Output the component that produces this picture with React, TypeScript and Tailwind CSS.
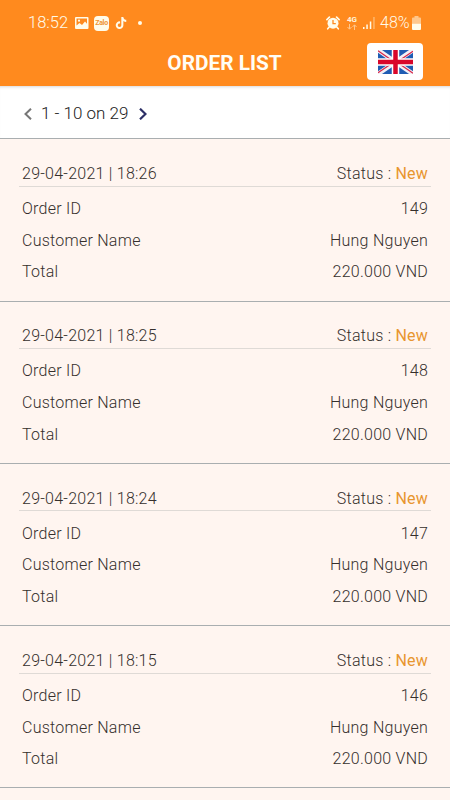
import { FaTiktok } from 'react-icons/fa';

const orders = [
  { id: 149, date: '29-04-2021 | 18:26', customer: 'Hung Nguyen', total: '220.000 VND', status: 'New' },
  { id: 148, date: '29-04-2021 | 18:25', customer: 'Hung Nguyen', total: '220.000 VND', status: 'New' },
  { id: 147, date: '29-04-2021 | 18:24', customer: 'Hung Nguyen', total: '220.000 VND', status: 'New' },
  { id: 146, date: '29-04-2021 | 18:15', customer: 'Hung Nguyen', total: '220.000 VND', status: 'New' },
];

type Order = (typeof orders)[number];

function PictureIcon() {
  return (
    <svg width="14" height="12" viewBox="0 0 14 12" aria-hidden="true">
      <path
        fillRule="evenodd"
        fill="#fffbea"
        d="M1 0h11.500a1 1 0 0 1 1 1v10a1 1 0 0 1-1 1H1a1 1 0 0 1-1-1V1a1 1 0 0 1 1-1ZM1.500 1.500v7l3-2.500 2.500 2 3-3.500 2 2.300V1.500H1.500Z"
      />
      <circle cx="4" cy="3.700" r="1.100" fill="#fffbea" />
    </svg>
  );
}

function AlarmIcon() {
  return (
    <svg width="14" height="14" viewBox="0 0 14 14" fill="none" aria-hidden="true">
      <circle cx="7" cy="7.200" r="5.500" fill="#fffbea" />
      <path d="M7 4v3.700h2.800" stroke="#ff8a1e" strokeWidth="1.300" />
      <path d="M.9 3.600 3.400 1.100M13.100 3.600 10.600 1.100" stroke="#fffbea" strokeWidth="1.700" strokeLinecap="round" />
      <path d="m3.200 11-1.500 1.800M10.800 11l1.500 1.800" stroke="#fffbea" strokeWidth="1.600" strokeLinecap="round" />
    </svg>
  );
}

function NetworkIcon() {
  return (
    <div className="flex w-[12px] flex-col items-center">
      <span className="text-[8px] leading-[8px] font-bold text-[#fff3da]">4G</span>
      <svg width="10" height="6" viewBox="0 0 10 6" fill="none" stroke="#ffc78c" aria-hidden="true">
        <path d="M2.500 0v5M.5 3l2 2.200L4.500 3M7.500 6V1M5.500 3l2-2.200 2 2.200" />
      </svg>
    </div>
  );
}

function SignalIcon() {
  return (
    <svg width="12" height="12" viewBox="0 0 12 12" aria-hidden="true">
      <path d="M0 10h1.500v2H0zM3.300 7.500h1.500V12H3.300zM6.800 4.500h1.500V12H6.800z" fill="#fffbea" />
      <path d="M10.200 0h1.500v12h-1.500z" fill="#ffb76b" />
    </svg>
  );
}

function BatteryIcon() {
  return (
    <svg width="9" height="14" viewBox="0 0 9 14" aria-hidden="true">
      <path d="M2.500 0h4v1.500H8a1 1 0 0 1 1 1V7.500H0v-5a1 1 0 0 1 1-1h1.500z" fill="#ffc78c" />
      <path d="M0 7.500h9V13a1 1 0 0 1-1 1H1a1 1 0 0 1-1-1z" fill="#fffbea" />
    </svg>
  );
}

function UkFlag() {
  return (
    <svg width="35" height="24" viewBox="0 0 35 24" aria-hidden="true">
      <path d="M0 0h35v24H0z" fill="#1f5cb3" />
      <path d="m0 0 35 24M35 0 0 24" stroke="#f3f0f5" strokeWidth="4.500" />
      <path d="M0 .8 17 12.500M35 23.200 18 11.500M35 1.200 18 12.700M0 22.800 17 11.300" stroke="#d8274a" strokeWidth="1.300" />
      <path d="M17.500 0v24M0 12h35" stroke="#fff" strokeWidth="7.500" />
      <path d="M17.500 0v24M0 12h35" stroke="#d9072b" strokeWidth="4.500" />
    </svg>
  );
}

function StatusBar() {
  return (
    <div className="flex h-[43px] items-center pt-[3px] pr-[29px] pl-[28px] text-[#fffbea]">
      <span className="w-[47px] text-[16.500px] font-light">18:52</span>
      <PictureIcon />
      <div className="ml-[5px] flex h-[15px] w-[15px] items-center justify-center rounded-[4px] bg-[#fffbea] text-[7px] leading-none font-bold tracking-[-0.300px] text-[#ee9433]">
        Zalo
      </div>
      <FaTiktok className="ml-[6px] h-3 w-3" aria-hidden="true" />
      <span className="ml-[11px] h-1 w-1 rounded-full bg-[#fffbea]" />
      <div className="ml-auto flex items-center">
        <AlarmIcon />
        <div className="ml-[6px]">
          <NetworkIcon />
        </div>
        <div className="ml-[5px]">
          <SignalIcon />
        </div>
        <span className="ml-[5px] w-[32px] text-[16px] font-light whitespace-nowrap">48%</span>
        <BatteryIcon />
      </div>
    </div>
  );
}

function Field({ label, value }: { label: string; value: string | number }) {
  return (
    <div className="flex h-[31.600px] items-center justify-between px-[3px]">
      <span>{label}</span>
      <span>{value}</span>
    </div>
  );
}

function OrderCard({ order }: { order: Order }) {
  return (
    <li className="h-[162.300px] border-t border-[#a9aeb0] px-[19px] pt-[23px]">
      <div className="flex h-[24.400px] items-center justify-between border-b border-[#dfdad6] px-[3px]">
        <span>{order.date}</span>
        <span>
          Status : <span className="font-normal tracking-[0.200px] text-[#e8962f]">{order.status}</span>
        </span>
      </div>
      <div className="pt-[6.700px]">
        <Field label="Order ID" value={order.id} />
        <Field label="Customer Name" value={order.customer} />
        <Field label="Total" value={order.total} />
      </div>
    </li>
  );
}

export default function App() {
  return (
    <div className="flex h-[800px] w-[450px] flex-col overflow-hidden bg-[#fff5f0] font-['Roboto',sans-serif] text-[#352f2c]">
      <header className="h-[86px] shrink-0 bg-[#ff8a1e]">
        <StatusBar />
        <div className="grid grid-cols-[1fr_auto_1fr] items-start pr-[27px]">
          <span />
          <h1 className="translate-x-[13px] pt-[5px] text-[20.800px] leading-[30px] font-bold text-[#fffdf5]">ORDER LIST</h1>
          <button
            type="button"
            aria-label="Change language"
            className="flex h-[37px] w-[56px] items-center justify-center justify-self-end rounded-[4px] bg-white"
          >
            <UkFlag />
          </button>
        </div>
      </header>

      {/* Pagination */}
      <nav className="flex h-[52.300px] shrink-0 items-center bg-white pt-[3px] pl-[24px] text-[17px] shadow-[inset_0_3px_3px_-2px_#d9d9d9]">
        <svg width="8" height="12" viewBox="0 0 8 12" fill="none" stroke="#777" strokeWidth="2" aria-hidden="true">
          <path d="M7 .7 1.500 6 7 11.300" />
        </svg>
        <span className="w-[98px] pl-[9px] font-light whitespace-nowrap text-[#222]">1 - 10 on 29</span>
        <svg className="ml-[9px]" width="8" height="12" viewBox="0 0 8 12" fill="none" stroke="#2c2f66" strokeWidth="2.200" aria-hidden="true">
          <path d="M1 .7 6.500 6 1 11.300" />
        </svg>
      </nav>

      <ul className="shrink-0 text-[16px] font-light tracking-[0.250px]">
        {orders.map((order) => (
          <OrderCard key={order.id} order={order} />
        ))}
        <li className="border-t border-[#a9aeb0]" />
      </ul>
    </div>
  );
}
